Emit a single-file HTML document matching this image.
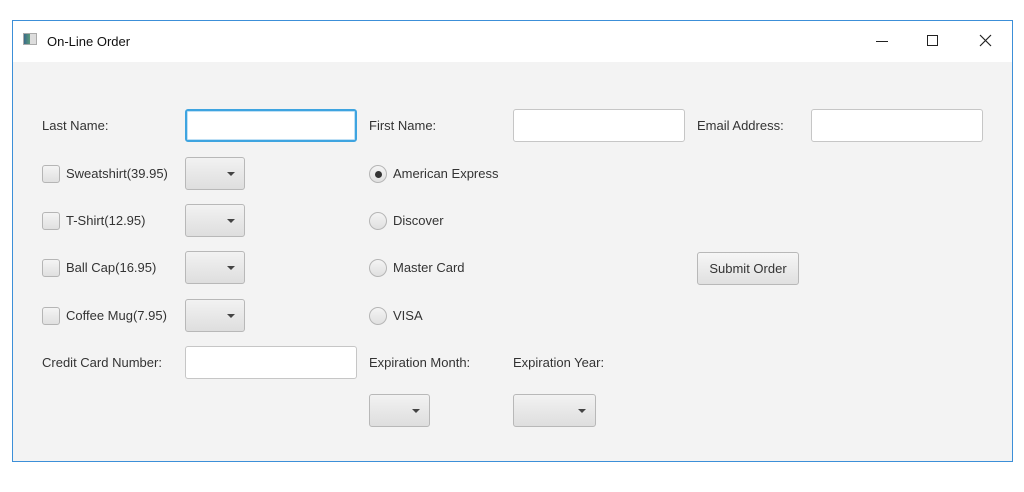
<!DOCTYPE html>
<html><head><meta charset="utf-8"><style>
*{margin:0;padding:0;box-sizing:border-box}
body{width:1024px;height:492px;background:#fff;position:relative;overflow:hidden;font-family:"Liberation Sans",sans-serif;font-size:13px;color:#333}
.win{position:absolute;left:12px;top:20px;width:1001px;height:442px;border:1px solid #3c8fd8;background:#f3f3f3}
.tb{position:absolute;left:0;top:0;right:0;height:41px;background:#fff}
.a{position:absolute}
.lbl{position:absolute;line-height:16px;white-space:nowrap}
.tf{position:absolute;height:33px;background:#fff;border:1px solid #c6c6c6;border-radius:3px}
.tf.f{border:2px solid #3ea4e0;box-shadow:inset 0 0 0 1px #bfe0f5}
.cb{position:absolute;width:60px;height:33px;border:1px solid #b8b8b8;border-radius:3px;background:linear-gradient(#f2f2f2,#dedede)}
.cb:after{content:"";position:absolute;right:9px;top:14px;border-left:4px solid transparent;border-right:4px solid transparent;border-top:4px solid #444}
.ck{position:absolute;width:18px;height:18px;border:1px solid #b5b5b5;border-radius:3px;background:linear-gradient(#f4f4f4,#e0e0e0)}
.rd{position:absolute;width:18px;height:18px;border:1px solid #b5b5b5;border-radius:50%;background:linear-gradient(#f4f4f4,#e0e0e0)}
.btn{position:absolute;border:1px solid #b8b8b8;border-radius:3px;background:linear-gradient(#f6f6f6,#e0e0e0);text-align:center;line-height:31px}
</style></head><body>
<div class="win">
<div class="tb">
 <div class="a" style="left:10px;top:12px;width:14px;height:12px;border:1px solid #aaa;background:linear-gradient(90deg,#3a6a8a 0,#5a9a7a 50%,#ddd 50%)"></div>
 <div class="lbl" style="left:34px;top:13px;color:#111">On-Line Order</div>
 <div class="a" style="left:863px;top:20px;width:12px;height:1px;background:#222"></div>
 <div class="a" style="left:914px;top:14px;width:11px;height:11px;border:1px solid #222"></div>
 <svg class="a" style="left:966px;top:13px" width="13" height="13"><path d="M1 1L12 12M12 1L1 12" stroke="#222" stroke-width="1.2"/></svg>
</div>
</div>
<div class="lbl" style="left:42px;top:118px">Last Name:</div>
<div class="tf f" style="left:185px;top:109px;width:172px"></div>
<div class="lbl" style="left:369px;top:118px">First Name:</div>
<div class="tf" style="left:513px;top:109px;width:172px"></div>
<div class="lbl" style="left:697px;top:118px">Email Address:</div>
<div class="tf" style="left:811px;top:109px;width:172px"></div>

<div class="ck" style="left:42px;top:165px"></div><div class="lbl" style="left:66px;top:166px">Sweatshirt(39.95)</div><div class="cb" style="left:185px;top:157px"></div>
<div class="ck" style="left:42px;top:212px"></div><div class="lbl" style="left:66px;top:213px">T-Shirt(12.95)</div><div class="cb" style="left:185px;top:204px"></div>
<div class="ck" style="left:42px;top:259px"></div><div class="lbl" style="left:66px;top:260px">Ball Cap(16.95)</div><div class="cb" style="left:185px;top:251px"></div>
<div class="ck" style="left:42px;top:307px"></div><div class="lbl" style="left:66px;top:308px">Coffee Mug(7.95)</div><div class="cb" style="left:185px;top:299px"></div>

<div class="rd" style="left:369px;top:165px"><div class="a" style="left:5px;top:5px;width:7px;height:7px;border-radius:50%;background:#333"></div></div><div class="lbl" style="left:393px;top:166px">American Express</div>
<div class="rd" style="left:369px;top:212px"></div><div class="lbl" style="left:393px;top:213px">Discover</div>
<div class="rd" style="left:369px;top:259px"></div><div class="lbl" style="left:393px;top:260px">Master Card</div>
<div class="rd" style="left:369px;top:307px"></div><div class="lbl" style="left:393px;top:308px">VISA</div>

<div class="btn" style="left:697px;top:252px;width:102px;height:33px">Submit Order</div>

<div class="lbl" style="left:42px;top:355px">Credit Card Number:</div>
<div class="tf" style="left:185px;top:346px;width:172px"></div>
<div class="lbl" style="left:369px;top:355px">Expiration Month:</div>
<div class="lbl" style="left:513px;top:355px">Expiration Year:</div>
<div class="cb" style="left:369px;top:394px;width:61px"></div>
<div class="cb" style="left:513px;top:394px;width:83px"></div>
</body></html>
